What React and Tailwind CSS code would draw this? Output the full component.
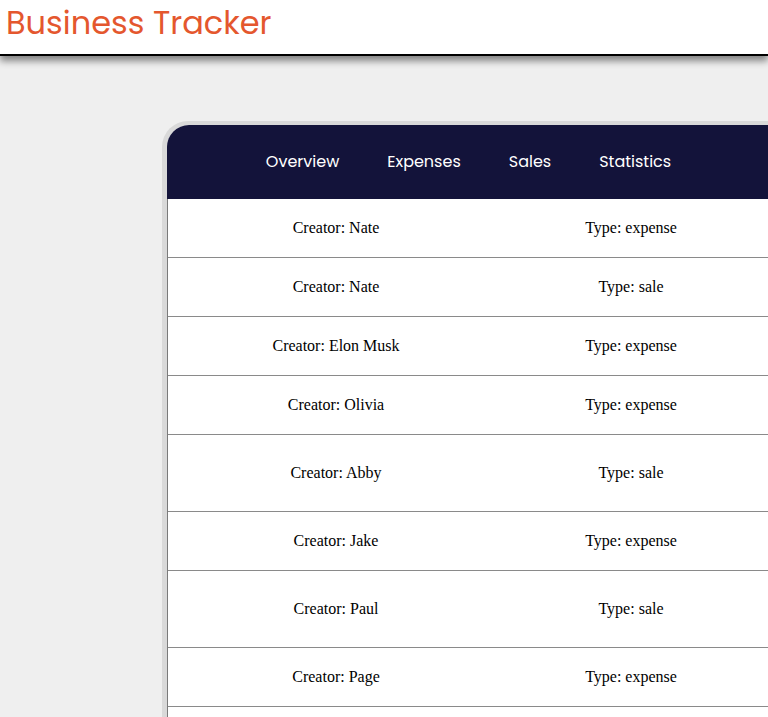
const rows = [
  { creator: "Nate", type: "expense", tall: false },
  { creator: "Nate", type: "sale", tall: false },
  { creator: "Elon Musk", type: "expense", tall: false },
  { creator: "Olivia", type: "expense", tall: false },
  { creator: "Abby", type: "sale", tall: true },
  { creator: "Jake", type: "expense", tall: false },
  { creator: "Paul", type: "sale", tall: true },
  { creator: "Page", type: "expense", tall: false },
  { creator: "Nate", type: "expense", tall: false },
];

function Header() {
  return (
    <header className="relative z-10 h-[56px] bg-white border-b-2 border-black shadow-[0_5px_7px_rgba(0,0,0,0.45)]">
      <h1 className="pl-[6px] pt-[1px] text-[32px] leading-[44px] text-[#e4572e] font-['Poppins','Inter',sans-serif]">
        Business Tracker
      </h1>
    </header>
  );
}

function Nav() {
  const links = ["Overview", "Expenses", "Sales", "Statistics"];
  return (
    <nav className="h-[74px] bg-[#13133a] rounded-tl-[22px] flex items-center justify-center gap-12">
      {links.map((l) => (
        <a key={l} className="text-white text-[16px] font-normal font-['Poppins','Inter',sans-serif] cursor-pointer">
          {l}
        </a>
      ))}
    </nav>
  );
}

export default function App() {
  return (
    <div className="h-[717px] overflow-hidden bg-[#efefef]">
      <Header />
      <div className="ml-[162px] mt-[65px] w-[608px] bg-[#d9d9d9] pl-[5px] pt-[4px] rounded-tl-[26px]">
        <div className="bg-white rounded-tl-[22px]">
          <Nav />
          <div className="border-l border-[#7a7a7a] font-['Liberation_Serif',serif] text-[16px] text-black">
            {rows.map((r, i) => (
              <div
                key={i}
                className={`grid grid-cols-[336px_254px_1fr] items-center border-b border-[#8a8a8a] ${r.tall ? "h-[77px]" : "h-[59px]"}`}
              >
                <span className="text-center">Creator: {r.creator}</span>
                <span className="text-center">Type: {r.type}</span>
                <span></span>
              </div>
            ))}
          </div>
        </div>
      </div>
    </div>
  );
}
